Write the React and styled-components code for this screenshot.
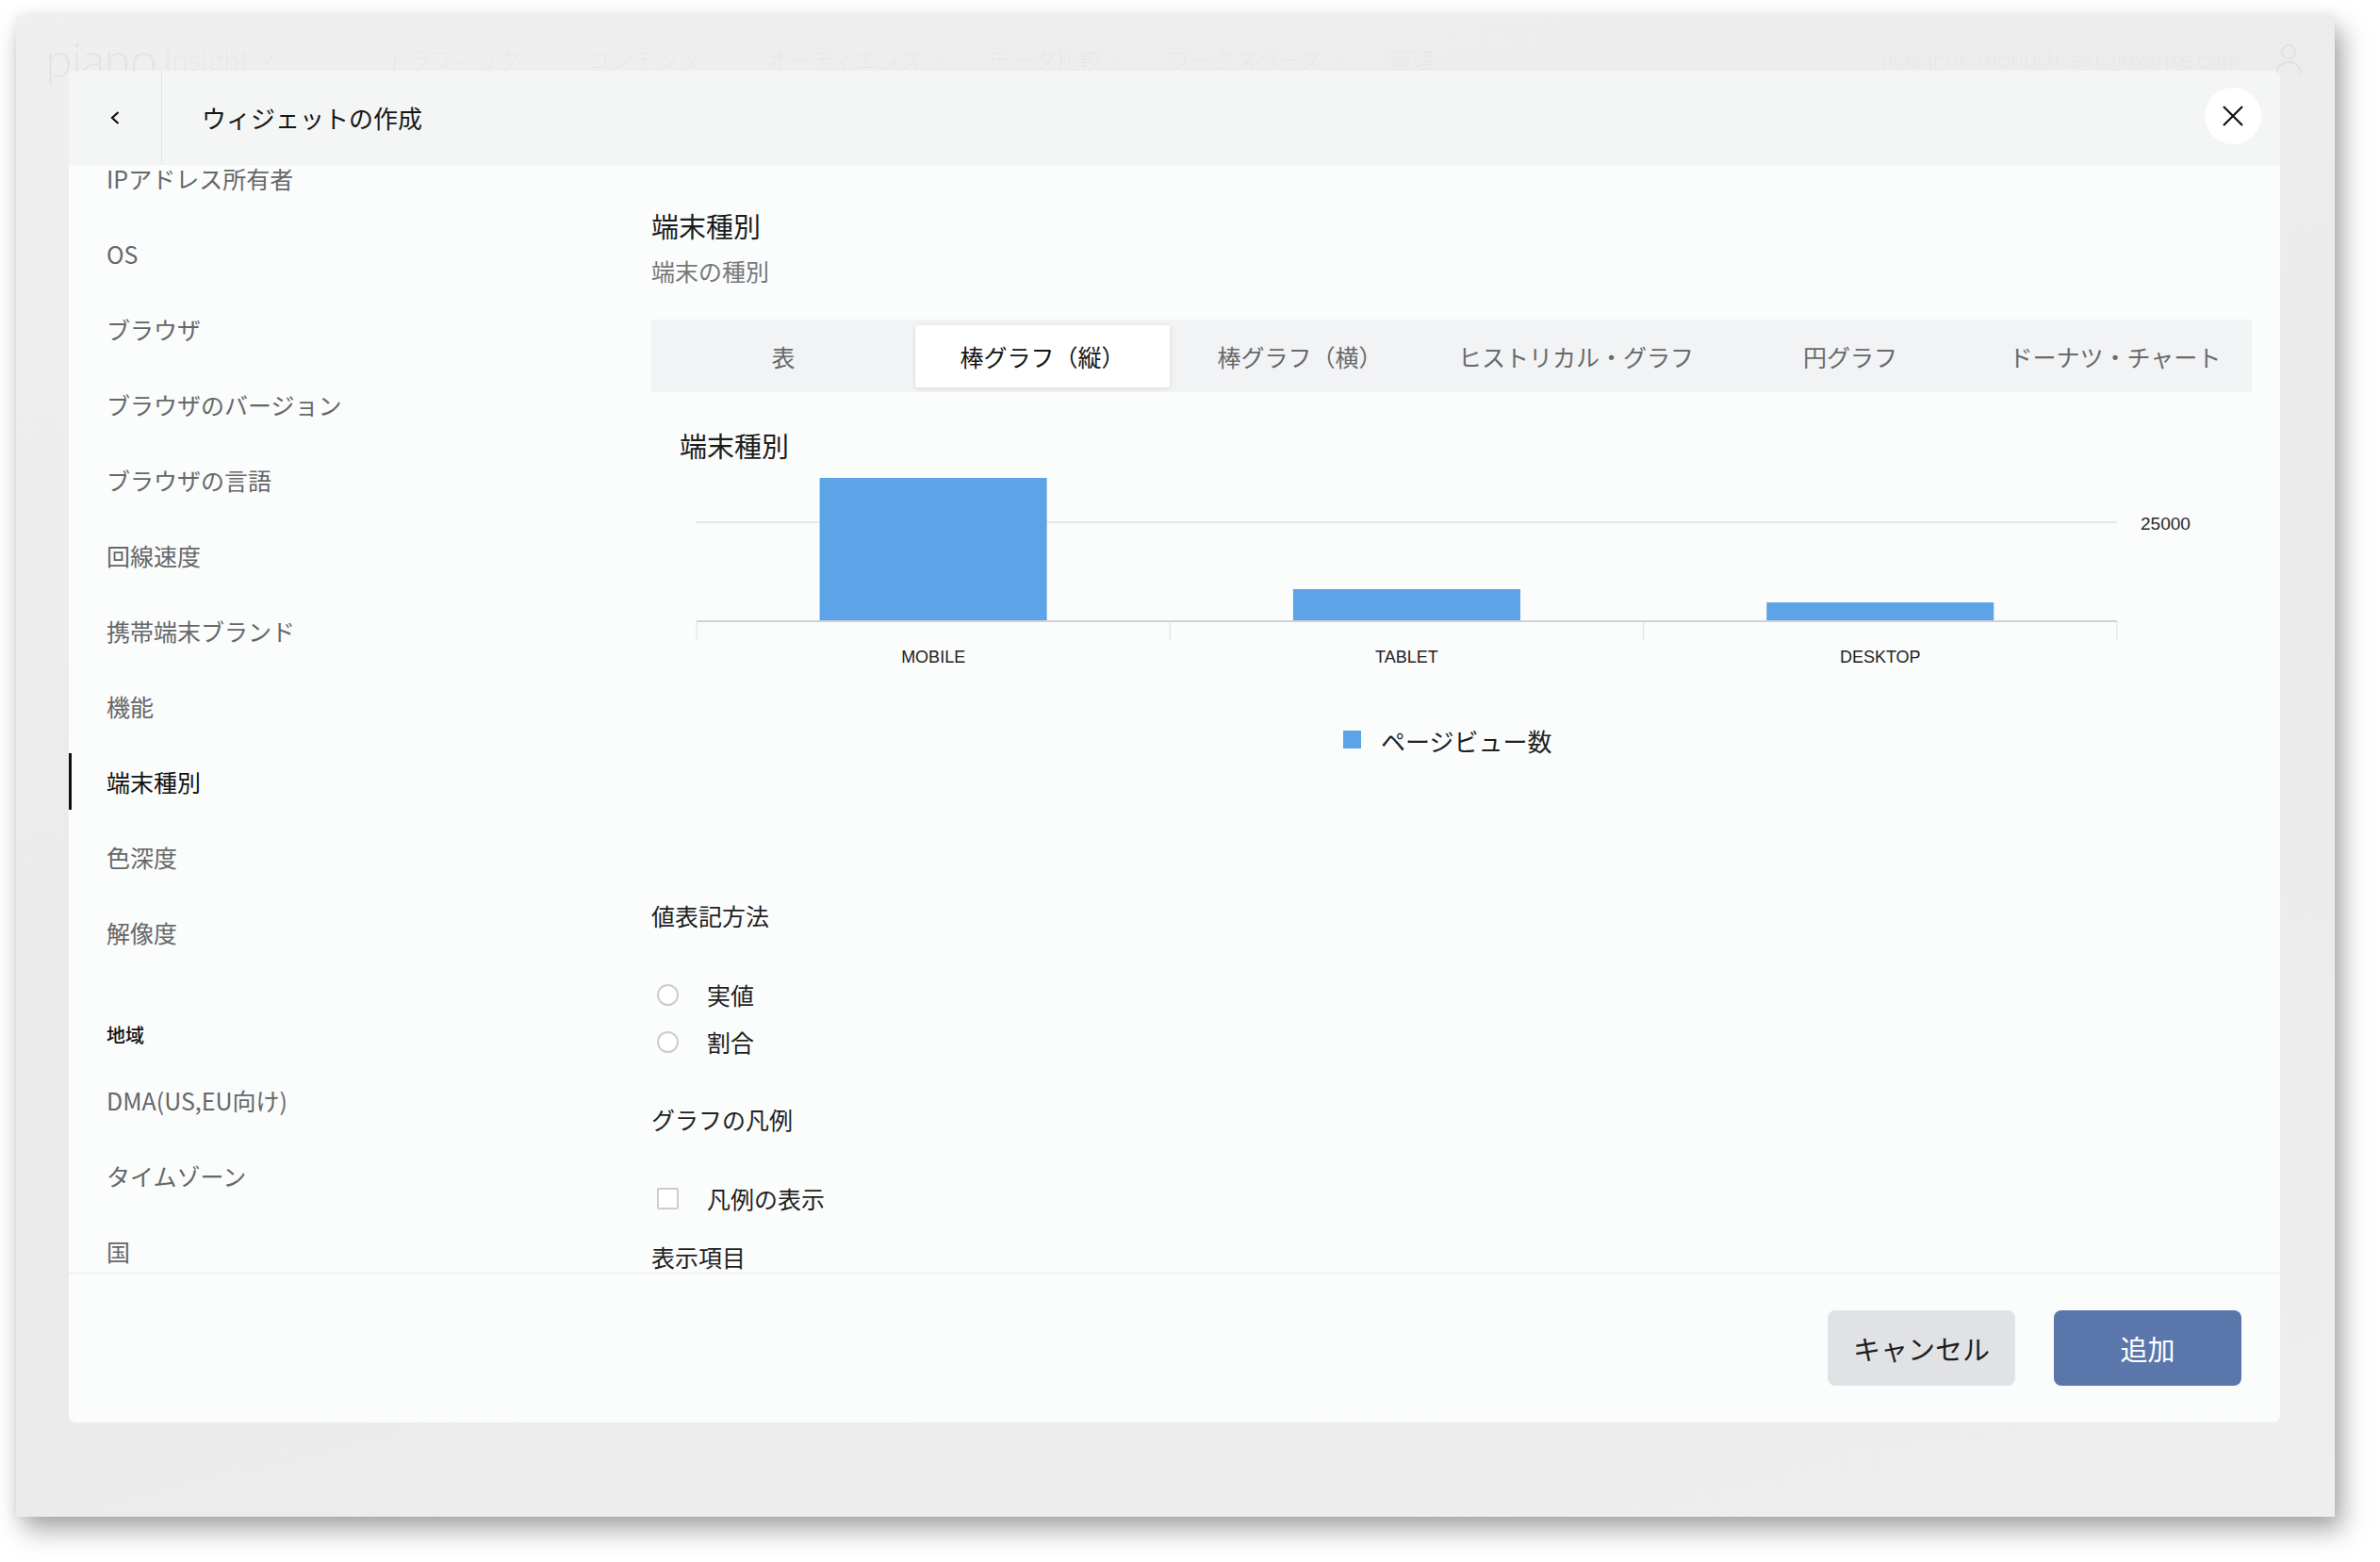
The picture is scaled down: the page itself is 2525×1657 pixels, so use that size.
import React from "react";
import styled, { createGlobalStyle } from "styled-components";

const JP = `"Noto Sans CJK JP", "Noto Sans", sans-serif`;
const LATIN = `"Liberation Sans", Arial, sans-serif`;

const GlobalStyle = createGlobalStyle`
  html, body {
    margin: 0;
    padding: 0;
    background: #ffffff;
  }

  body {
    width: 2525px;
    height: 1657px;
    overflow: hidden;
    font-family: ${JP};
  }

  * {
    box-sizing: border-box;
  }
`;

const SIDE_ITEMS = [
  { label: "IPアドレス所有者" },
  { label: "OS" },
  { label: "ブラウザ" },
  { label: "ブラウザのバージョン" },
  { label: "ブラウザの言語" },
  { label: "回線速度" },
  { label: "携帯端末ブランド" },
  { label: "機能" },
  { label: "端末種別", active: true },
  { label: "色深度" },
  { label: "解像度" },
];

const REGION_ITEMS = ["DMA(US,EU向け)", "タイムゾーン", "国"];

const CHART_TABS = [
  { label: "表", width: "280px" },
  { label: "棒グラフ（縦）", width: "270px", active: true },
  { label: "棒グラフ（横）", width: "276px" },
  { label: "ヒストリカル・グラフ", width: "310px" },
  { label: "円グラフ", width: "272px" },
  { label: "ドーナツ・チャート", width: "1fr" },
];

const DEVICES = [
  { name: "MOBILE", views: 36200 },
  { name: "TABLET", views: 8100 },
  { name: "DESKTOP", views: 4750 },
];

const NAV = ["トラフィック", "コンテンツ", "オーディエンス", "データ比較", "ワークスペース", "管理"];

/* window frame with the app behind the dialog */

const Window = styled.div`
  position: relative;
  margin: 17px 0 0 17px;
  width: 2460px;
  height: 1592px;
  background: linear-gradient(165deg, #efeff0 0%, #eaeaeb 55%, #eeeeef 100%);
  box-shadow: 8px 14px 26px rgba(0, 0, 0, 0.34), 0 0 14px rgba(0, 0, 0, 0.07);
`;

const AppBar = styled.header`
  display: flex;
  align-items: center;
  height: 90px;
  padding: 0 34px 0 31px;
  color: rgba(0, 0, 0, 0.045);
`;

const Logo = styled.span`
  font-family: Lato, sans-serif;
  font-weight: 300;
  font-size: 52px;
  letter-spacing: -1px;
`;

const Product = styled.span`
  margin-left: 8px;
  font-family: Lato, sans-serif;
  font-weight: 300;
  font-size: 32px;
`;

const Caret = styled.span`
  margin-left: 10px;
  font-size: 16px;
`;

const Nav = styled.nav`
  display: flex;
  gap: 44px;
  margin-left: 118px;
  font-size: 24px;
  font-weight: 300;
`;

const NavItem = styled.span`
  display: flex;
  align-items: center;
`;

const Account = styled.div`
  display: flex;
  align-items: center;
  gap: 36px;
  margin-left: auto;
  font-family: Lato, sans-serif;
  font-weight: 300;
  font-size: 25px;
`;

/* dialog */

const Modal = styled.section`
  position: absolute;
  left: 56px;
  top: 58px;
  width: 2346px;
  height: 1434px;
  display: flex;
  flex-direction: column;
  overflow: hidden;
  background: #fbfcfc;
  border-radius: 8px;
`;

const ModalHeader = styled.header`
  flex: none;
  display: flex;
  align-items: center;
  height: 100px;
  background: #f4f5f5;
`;

const BackButton = styled.button`
  display: flex;
  align-items: center;
  justify-content: center;
  width: 99px;
  height: 100%;
  padding: 0;
  border: 0;
  border-right: 1px solid #e3e4e5;
  background: transparent;
`;

const ModalTitle = styled.h1`
  margin: 0 0 0 42px;
  font-size: 26px;
  font-weight: 400;
  line-height: 36px;
  color: #161616;
`;

const CloseButton = styled.button`
  display: flex;
  align-items: center;
  justify-content: center;
  width: 60px;
  height: 60px;
  margin: -4px 20px 0 auto;
  padding: 0;
  border: 0;
  border-radius: 50%;
  background: #ffffff;
`;

const ModalBody = styled.div`
  flex: 1;
  display: flex;
  min-height: 0;
  overflow: hidden;
`;

const Sidebar = styled.aside`
  flex: none;
  width: 618px;
  overflow: hidden;
`;

const SideList = styled.ul`
  margin: -26px 0 0;
  padding: 0;
  list-style: none;
`;

const SideItem = styled.li`
  position: relative;
  display: flex;
  align-items: center;
  height: 80px;
  padding-left: 40px;
  font-size: 25px;
  color: ${(props) => (props.active ? "#111111" : "#666769")};

  &::before {
    content: "";
    display: ${(props) => (props.active ? "block" : "none")};
    position: absolute;
    left: 0;
    top: 10px;
    width: 3px;
    height: 60px;
    background: #111111;
  }
`;

const SideGroup = styled.li`
  display: flex;
  align-items: center;
  height: 60px;
  margin-top: 38px;
  padding-left: 40px;
  font-size: 20px;
  font-weight: 500;
  color: #111111;
`;

const Content = styled.main`
  flex: 1;
  display: flex;
  flex-direction: column;
  min-width: 0;
  padding: 45px 30px 0 0;
  overflow: hidden;
`;

const Title = styled.h2`
  margin: 0;
  font-size: 29px;
  font-weight: 400;
  line-height: 38px;
  color: #1c1c1c;
`;

const Subtitle = styled.p`
  margin: 12px 0 0;
  font-size: 25px;
  line-height: 34px;
  color: #77787a;
`;

const Tabs = styled.div`
  display: grid;
  grid-template-columns: ${(props) => props.columns};
  height: 79px;
  margin-top: 35px;
  padding: 6px 0 5px;
  background: #f2f3f5;
  border-radius: 4px;
`;

const Tab = styled.button`
  display: flex;
  align-items: center;
  justify-content: center;
  padding: 0;
  border: 0;
  border-radius: 2px;
  font-family: ${JP};
  font-size: 25px;
  white-space: nowrap;
  color: ${(props) => (props.active ? "#141414" : "#69696b")};
  background: ${(props) => (props.active ? "#ffffff" : "transparent")};
  box-shadow: ${(props) =>
    props.active ? "0 1px 5px rgba(0, 0, 0, 0.12)" : "none"};
`;

const ChartTitle = styled.h3`
  margin: 36px 0 0;
  padding-left: 30px;
  font-size: 29px;
  font-weight: 400;
  line-height: 40px;
  color: #1c1c1c;
`;

const ChartSvg = styled.svg`
  display: block;
  flex: none;
`;

const FieldLabel = styled.div`
  margin-top: ${(props) => props.gap};
  font-size: 25px;
  line-height: 34px;
  color: #1f1f1f;
`;

const OptionGroup = styled.div`
  display: flex;
  flex-direction: column;
  gap: 16px;
  margin-top: 50px;
`;

const Option = styled.label`
  display: flex;
  align-items: center;
  gap: 30px;
  height: 34px;
  padding-left: 6px;
  font-size: 25px;
  color: #1f1f1f;
`;

const Radio = styled.span`
  flex: none;
  width: 23px;
  height: 23px;
  border: 2px solid #cbcccf;
  border-radius: 50%;
  background: #ffffff;
`;

const Checkbox = styled.span`
  flex: none;
  width: 23px;
  height: 23px;
  border: 2px solid #cbcccf;
  border-radius: 2px;
  background: #ffffff;
`;

const ModalFooter = styled.footer`
  flex: none;
  display: flex;
  align-items: center;
  justify-content: flex-end;
  gap: 41px;
  height: 159px;
  padding-right: 41px;
  border-top: 1px solid #ebeced;
`;

const Button = styled.button`
  width: 199px;
  height: 80px;
  border: 0;
  border-radius: 8px;
  font-family: ${JP};
  font-size: 29px;
  color: ${(props) => (props.primary ? "#ffffff" : "#1d1d1d")};
  background: ${(props) => (props.primary ? "#5b76ab" : "#e1e2e5")};
`;

function DeviceChart() {
  const baseline = 167;
  const perUnit = 105 / 25000;
  const slot = 502.3;

  return (
    <ChartSvg width="1698" height="380" viewBox="0 0 1698 380">
      <line x1="48" x2="1555" y1="62" y2="62" stroke="#e6e7e8" strokeWidth="2" />
      <text
        x="1580"
        y="63"
        dominantBaseline="central"
        fontFamily={LATIN}
        fontSize="19"
        fill="#2a2a2a"
      >
        25000
      </text>

      {DEVICES.map((d, i) => {
        const h = d.views * perUnit;
        const cx = 48 + slot * i + slot / 2;
        return (
          <g key={d.name}>
            <rect x={cx - 120.5} y={baseline - h} width="241" height={h} fill="#5ca4e7" />
            <text
              x={cx}
              y="205"
              textAnchor="middle"
              dominantBaseline="central"
              fontFamily={LATIN}
              fontSize="18"
              fill="#222222"
            >
              {d.name}
            </text>
          </g>
        );
      })}

      <line x1="48" x2="1555" y1={baseline} y2={baseline} stroke="#cfd2d6" strokeWidth="2" />
      {[0, 1, 2, 3].map((i) => (
        <line
          key={i}
          x1={48 + slot * i}
          x2={48 + slot * i}
          y1={baseline}
          y2="187"
          stroke="#dfe0e2"
          strokeWidth="1"
        />
      ))}

      <rect x="734" y="283" width="19" height="19" fill="#5ca4e7" />
      <text
        x="774"
        y="293"
        dominantBaseline="central"
        fontFamily={JP}
        fontSize="26"
        fill="#1f1f1f"
      >
        ページビュー数
      </text>
    </ChartSvg>
  );
}

export default function App() {
  return (
    <>
      <GlobalStyle />
      <Window>
        <AppBar>
          <Logo>piano</Logo>
          <Product>Insight</Product>
          <Caret>∨</Caret>
          <Nav>
            {NAV.map((item) => (
              <NavItem key={item}>
                {item}
                <Caret>∨</Caret>
              </NavItem>
            ))}
          </Nav>
          <Account>
            <span>masanori.moriushi.ext@oxense.com</span>
            <svg width="30" height="34" viewBox="0 0 30 34" fill="none" stroke="currentColor" strokeWidth="2">
              <circle cx="15" cy="10" r="7" />
              <path d="M2 33c1-8 6-12 13-12s12 4 13 12" />
            </svg>
          </Account>
        </AppBar>

        <Modal>
          <ModalHeader>
            <BackButton aria-label="戻る">
              <svg width="14" height="18" viewBox="0 0 14 18" fill="none">
                <path d="M10.5 3 L4 9 L10.5 15" stroke="#111" strokeWidth="2.2" />
              </svg>
            </BackButton>
            <ModalTitle>ウィジェットの作成</ModalTitle>
            <CloseButton aria-label="閉じる">
              <svg width="22" height="22" viewBox="0 0 22 22" fill="none">
                <path d="M1 1 L21 21 M21 1 L1 21" stroke="#111" strokeWidth="2.2" />
              </svg>
            </CloseButton>
          </ModalHeader>

          <ModalBody>
            <Sidebar>
              <SideList>
                {SIDE_ITEMS.map((item) => (
                  <SideItem key={item.label} active={item.active}>
                    {item.label}
                  </SideItem>
                ))}
                <SideGroup>地域</SideGroup>
                {REGION_ITEMS.map((label) => (
                  <SideItem key={label}>{label}</SideItem>
                ))}
              </SideList>
            </Sidebar>

            <Content>
              <Title>端末種別</Title>
              <Subtitle>端末の種別</Subtitle>

              <Tabs columns={CHART_TABS.map((t) => t.width).join(" ")}>
                {CHART_TABS.map((tab) => (
                  <Tab key={tab.label} active={tab.active}>
                    {tab.label}
                  </Tab>
                ))}
              </Tabs>

              <ChartTitle>端末種別</ChartTitle>
              <DeviceChart />

              <FieldLabel gap="82px">値表記方法</FieldLabel>
              <OptionGroup>
                <Option>
                  <Radio />
                  実値
                </Option>
                <Option>
                  <Radio />
                  割合
                </Option>
              </OptionGroup>

              <FieldLabel gap="48px">グラフの凡例</FieldLabel>
              <OptionGroup>
                <Option>
                  <Checkbox />
                  凡例の表示
                </Option>
              </OptionGroup>

              <FieldLabel gap="28px">表示項目</FieldLabel>
            </Content>
          </ModalBody>

          <ModalFooter>
            <Button>キャンセル</Button>
            <Button primary>追加</Button>
          </ModalFooter>
        </Modal>
      </Window>
    </>
  );
}
